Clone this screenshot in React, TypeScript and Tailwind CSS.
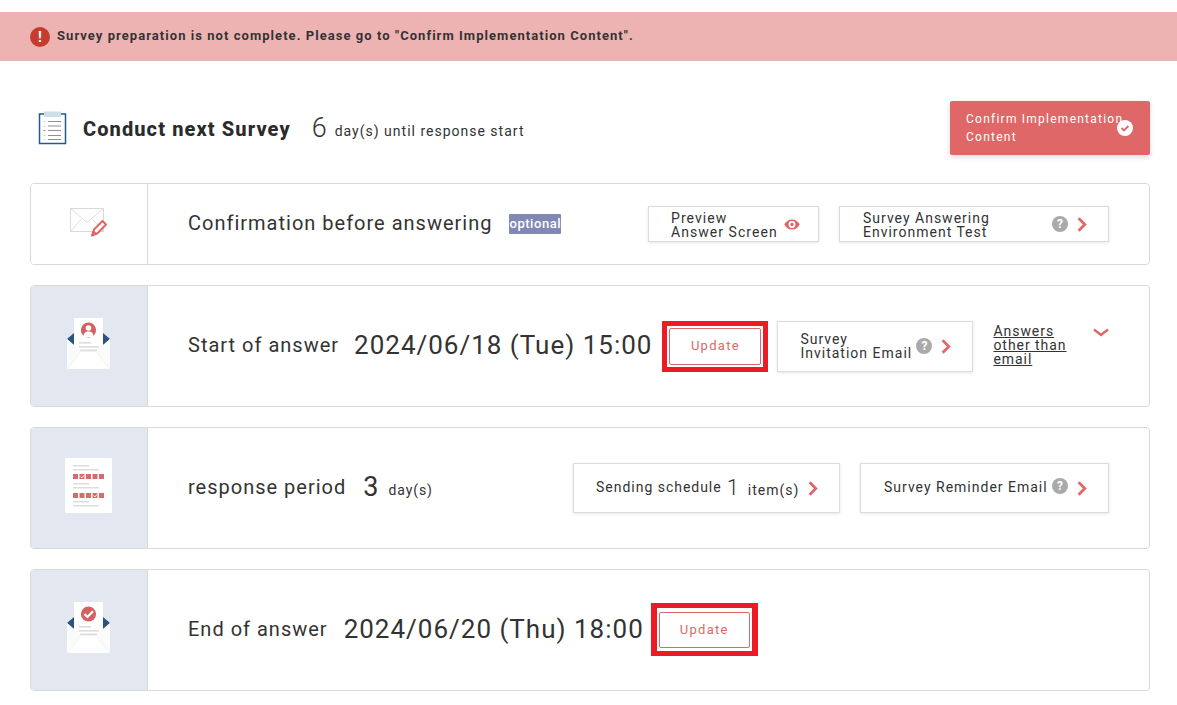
import React from "react";

const Chevron = ({ className = "" }: { className?: string }) => (
  <svg width="10" height="15" viewBox="0 0 10 15" className={className} fill="none">
    <path d="M1.6 1.3 L7.8 7.5 L1.6 13.7" stroke="#df6767" strokeWidth="2.7" />
  </svg>
);

const Help = () => (
  <span className="flex h-4 w-4 shrink-0 items-center justify-center rounded-full bg-[#aaaaaa] text-[12px] font-bold leading-none text-white tracking-normal">?</span>
);

const Eye = () => (
  <svg width="16" height="11" viewBox="0 0 16 11" className="shrink-0">
    <path d="M8 0.5C4.6 0.5 1.8 2.5 0.3 5.5C1.8 8.5 4.6 10.5 8 10.5C11.4 10.5 14.2 8.5 15.7 5.5C14.2 2.5 11.4 0.5 8 0.5Z" fill="#df6767" />
    <circle cx="8" cy="5.5" r="3.4" fill="#fff" />
    <circle cx="8" cy="5.5" r="1.7" fill="#df6767" />
  </svg>
);

const Clipboard = () => (
  <svg width="30" height="34" viewBox="0 0 30 34" className="shrink-0">
    <rect x="1.5" y="3" width="26" height="29.5" fill="#fff" stroke="#235a8a" strokeWidth="1.5" />
    <rect x="6" y="0.5" width="17" height="5.5" fill="#cfdfe8" />
    {[10, 14.5, 19, 24, 28].map((y, i) => (
      <g key={y}>
        <rect x="5.5" y={y} width="2" height="1" fill={i === 2 ? "#df6767" : "#c9d8e0"} />
        <rect x="10" y={y} width="13" height="1" fill="#8f8f8f" />
      </g>
    ))}
  </svg>
);

const PencilMail = () => (
  <svg width="38" height="30" viewBox="0 0 38 30">
    <rect x="0.5" y="0.5" width="33" height="23" fill="#fff" stroke="#d9d9d9" strokeWidth="1" />
    <path d="M0.5 0.5 L17 14.5 L33.5 0.5 M0.5 23.5 L11.5 11 M33.5 23.5 L22.5 11" fill="none" stroke="#dddddd" strokeWidth="1" />
    <path d="M22 27.5 L24 21.5 L32.5 13 L36 16.5 L27.5 25.3 Z" fill="#fff" stroke="#df6767" strokeWidth="2" strokeLinejoin="round" />
    <path d="M21 28.5 L23.5 22 L27.5 26 Z" fill="#df6767" />
  </svg>
);

const Envelope = ({ kind }: { kind: "person" | "check" }) => (
  <svg width="44" height="52" viewBox="0 0 44 52">
    <path d="M0 21 L7 15 L7 27 Z" fill="#2a5582" />
    <path d="M43 21 L36 15 L36 27 Z" fill="#2a5582" />
    <rect x="7" y="0" width="29" height="36" rx="1" fill="#fff" />
    <rect x="12" y="24" width="12" height="1.6" fill="#dddddd" />
    <rect x="12" y="28" width="20" height="1.6" fill="#dddddd" />
    <rect x="13" y="31.5" width="17" height="1.6" fill="#dddddd" />
    <path d="M0 21 L12 31.5 L13 33.5 L30 33.5 L31 31.5 L43 21 L43 51 L0 51 Z" fill="#fbfbfb" />
    <path d="M1 50.5 L14 33.5 L29 33.5 L42 50.5" fill="#fff" stroke="#eeeeee" strokeWidth="0.8" />
    <circle cx="21.5" cy="12" r="7.6" fill="#d46060" />
    {kind === "person" ? (
      <>
        <circle cx="21.5" cy="10" r="2.8" fill="#fff" />
        <path d="M16.5 19 C16.5 14.5 19 13.5 21.5 13.5 C24 13.5 26.5 14.5 26.5 19 Z" fill="#fff" />
      </>
    ) : (
      <path d="M17.5 12 L20.5 15 L26 9.3" fill="none" stroke="#fff" strokeWidth="2.2" />
    )}
  </svg>
);

const SurveySheet = () => {
  const squares = [0, 1, 2, 3, 4];
  return (
    <svg width="47" height="55" viewBox="0 0 47 55">
      <rect width="47" height="55" rx="1" fill="#fff" />
      {[7, 25, 43].map((y) => <rect key={y} x="8" y={y} width="16" height="1.5" fill="#dddddd" />)}
      {[11, 29, 47].map((y) => <rect key={y} x="8" y={y} width="26" height="1.5" fill="#dddddd" />)}
      {[16, 35].map((y) =>
        squares.map((i) => (
          <rect key={`${y}-${i}`} x={8 + i * 6.5} y={y} width="5" height="5" fill="#d96a6a" />
        )),
      )}
      <path d="M15.5 18.5 L17 20 L19 17.2" fill="none" stroke="#fff" strokeWidth="0.8" />
      <path d="M28.5 37.5 L30 39 L32 36.2" fill="none" stroke="#fff" strokeWidth="0.8" />
    </svg>
  );
};

const Outline = ({ className, children }: { className: string; children: React.ReactNode }) => (
  <div className={`flex shrink-0 items-center border border-[#dcdcdc] bg-white shadow-[0_1px_3px_rgba(0,0,0,0.1)] ${className}`}>{children}</div>
);

const UpdateInner = ({ className }: { className: string }) => (
  <div className={`flex items-center justify-center rounded-[2px] border border-[#df6767] text-[13px] tracking-[1.3px] text-[#df6767] ${className}`}>Update</div>
);

const Row = ({ icon, shaded, className, children }: { icon: React.ReactNode; shaded?: boolean; className: string; children: React.ReactNode }) => (
  <section className={`flex overflow-hidden rounded-[4px] border border-[#d9d9d9] ${className}`}>
    <div className={`flex w-[117px] shrink-0 items-center justify-center border-r border-[#d9d9d9] ${shaded ? "bg-[#e3e7ef]" : "bg-white"}`}>{icon}</div>
    <div className="flex min-w-0 flex-1 items-center pl-10 pr-10">{children}</div>
  </section>
);

export default function App() {
  return (
    <div className="min-h-[705px] bg-white pt-3 text-[#333333] [font-family:Roboto,'Liberation_Sans',sans-serif]">
      <div className="flex h-[49px] items-center gap-[7px] bg-[#edb3b3] px-[30px]">
        <span className="flex h-5 w-5 items-center justify-center rounded-full bg-[#c63b2b] text-[14px] font-bold leading-none text-white">!</span>
        <p className="mb-[2px] text-[13px] font-bold tracking-[1.05px]">Survey preparation is not complete. Please go to "Confirm Implementation Content".</p>
      </div>

      <main className="pl-[30px] pr-[27px]">
        <header className="mt-10 mb-7 flex h-[54px] items-center">
          <div className="ml-[8px] mr-[15px] flex"><Clipboard /></div>
          <h1 className="mt-[2px] text-[20px] font-extrabold tracking-[1.1px] text-[#2b2b2b]">Conduct next Survey</h1>
          <span className="ml-[21px] text-[27px] font-light leading-none">6</span>
          <span className="ml-[8px] mt-[7px] text-[14px] tracking-[1px]">day(s) until response start</span>
          <div className="relative ml-auto h-[54px] w-[200px] shrink-0 rounded-[2px] bg-[#df6767] py-[9px] pl-4 text-[12px] leading-[18px] tracking-[1.24px] text-white shadow-[0_2px_5px_rgba(0,0,0,0.15)]">
            Confirm Implementation<br />Content
            <svg width="16" height="16" viewBox="0 0 16 16" className="absolute left-[167px] top-[19px]">
              <circle cx="8" cy="8" r="8" fill="#fff" />
              <path d="M4.6 8 L7 10.4 L11.4 6" fill="none" stroke="#df6767" strokeWidth="1.8" />
            </svg>
          </div>
        </header>

        <div className="flex flex-col gap-5">
          <Row icon={<div className="mb-[2px] flex"><PencilMail /></div>} className="h-[82px]">
            <span className="mb-[2px] whitespace-nowrap text-[20px] tracking-[1px]">Confirmation before answering</span>
            <span className="ml-[17px] rounded-[1px] bg-[#8288b4] text-[13px] leading-5 font-medium tracking-[0.55px] text-white">optional</span>
            <div className="ml-auto flex gap-5">
              <Outline className="h-9 w-[171px] pl-[22px] pr-[18px] text-[14px] leading-[14px] tracking-[1.05px]">
                <span className="mt-[2px] flex-1">Preview<br />Answer Screen</span>
                <Eye />
              </Outline>
              <Outline className="h-9 w-[270px] pl-[23px] pr-[21px] text-[14px] leading-[14px] tracking-[1px]">
                <span className="mt-[2px] flex-1">Survey Answering<br />Environment Test</span>
                <Help />
                <Chevron className="ml-[9px]" />
              </Outline>
            </div>
          </Row>

          <Row shaded icon={<div className="mb-[5px] flex"><Envelope kind="person" /></div>} className="h-[122px]">
            <span className="mb-[2px] whitespace-nowrap text-[20px] tracking-[1px]">Start of answer</span>
            <span className="mb-[2px] ml-[15px] whitespace-nowrap text-[26px] tracking-[1px]">2024/06/18 (Tue) 15:00</span>
            <div className="ml-[10px] flex items-center">
              <div className="flex shrink-0 border-[5px] border-[#ed1c24] p-[2px]">
                <UpdateInner className="h-[37px] w-[92px]" />
              </div>
              <Outline className="ml-[9px] h-[51px] w-[196px] pl-[22px] pr-[21px] text-[14px] leading-[14px] tracking-[1px]">
                <span className="mb-[1px] flex-1">Survey<br />Invitation Email</span>
                <Help />
                <Chevron className="ml-[9px]" />
              </Outline>
              <a className="ml-[20px] mt-[-2px] w-[80px] text-[14px] leading-[14px] tracking-[0.95px] underline">Answers other than email</a>
              <svg width="16" height="9" viewBox="0 0 16 9" className="mb-[27px] ml-[20px]" fill="none">
                <path d="M1 1.5 L8 7 L15 1.5" stroke="#df6767" strokeWidth="2.4" />
              </svg>
            </div>
          </Row>

          <Row shaded icon={<div className="mb-[6px] mr-[2px] flex"><SurveySheet /></div>} className="h-[122px]">
            <span className="mb-[2px] whitespace-nowrap text-[20px] tracking-[1px]">response period</span>
            <span className="mb-[2px] ml-[17px] text-[27px] leading-none">3</span>
            <span className="ml-[10px] mt-[5px] text-[14px] tracking-[0.9px]">day(s)</span>
            <div className="ml-auto flex gap-5">
              <Outline className="h-[50px] w-[267px] pl-[22px] pr-[21px] text-[14px] tracking-[0.98px]">
                <span className="mb-[2px]">Sending schedule</span>
                <span className="ml-[5px] text-[22px] leading-none font-light">1</span>
                <span className="ml-[8px] mt-[4px]">item(s)</span>
                <Chevron className="ml-auto" />
              </Outline>
              <Outline className="h-[50px] w-[249px] pl-[23px] pr-[21px] text-[14px] tracking-[1px]">
                <span className="mb-[2px] flex-1 whitespace-nowrap">Survey Reminder Email</span>
                <div className="mb-[5px] flex"><Help /></div>
                <Chevron className="ml-[9px]" />
              </Outline>
            </div>
          </Row>

          <Row shaded icon={<div className="mb-[5px] flex"><Envelope kind="check" /></div>} className="h-[122px]">
            <span className="mb-[2px] whitespace-nowrap text-[20px] tracking-[1px]">End of answer</span>
            <span className="mb-[2px] ml-4 whitespace-nowrap text-[26px] tracking-[1px]">2024/06/20 (Thu) 18:00</span>
            <div className="mb-[2px] ml-[7px] flex shrink-0 border-x-[6px] border-y-[5px] border-[#ed1c24] px-[2px] pb-[3px] pt-[4px]">
              <UpdateInner className="h-[36px] w-[91px]" />
            </div>
          </Row>
        </div>
      </main>
    </div>
  );
}
